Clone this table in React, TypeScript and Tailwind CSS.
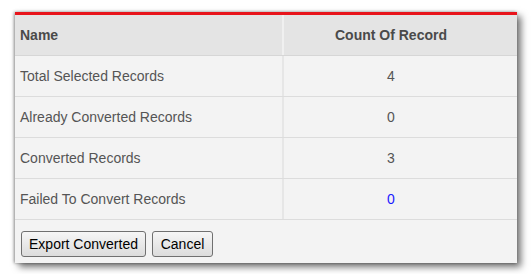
import React from "react";

const rows: { name: string; count: number; link?: boolean }[] = [
  { name: "Total Selected Records", count: 4 },
  { name: "Already Converted Records", count: 0 },
  { name: "Converted Records", count: 3 },
  { name: "Failed To Convert Records", count: 0, link: true },
];

export default function App() {
  return (
    <div
      className="w-[532px] h-[274px] bg-white pt-[12px] pl-[15px]"
      style={{ fontFamily: '"Liberation Sans", Arial, sans-serif' }}
    >
      <div className="w-[502px] h-[251px] bg-[#f3f3f3] border-t-[3px] border-[#e8141b] shadow-[4px_4px_7px_rgba(0,0,0,0.55),-1px_0_3px_rgba(0,0,0,0.4)] flex flex-col">
        <div className="flex h-[41px] bg-[#e4e4e4] border-b border-[#d6d6d6] text-[14px] font-bold text-[#4a4a4a]">
          <div className="w-[269px] flex items-center pl-[5px] pt-[1px] border-r-2 border-[#f0f0f0]">Name</div>
          <div className="flex-1 flex items-center justify-center pr-[19px] pt-[1px]">Count Of Record</div>
        </div>
        {rows.map((r) => (
          <div key={r.name} className="flex h-[41px] border-b border-[#dcdcdc] text-[14px] text-[#555]">
            <div className="w-[269px] flex items-center pl-[5px] pt-[1px] border-r-2 border-[#e6e6e6]">{r.name}</div>
            <div
              className={
                "flex-1 flex items-center justify-center pr-[19px] pt-[1px] " +
                (r.link ? "text-[#1a1aff]" : "")
              }
            >
              {r.count}
            </div>
          </div>
        ))}
        <div className="flex gap-[6px] pl-[6px] pt-[11px]">
          <button className="h-[26px] w-[125px] border border-[#707070] rounded-[3px] bg-gradient-to-b from-[#f6f6f6] to-[#dcdcdc] text-[14px] text-black leading-none">
            Export Converted
          </button>
          <button className="h-[26px] w-[61px] border border-[#707070] rounded-[3px] bg-gradient-to-b from-[#f6f6f6] to-[#dcdcdc] text-[14px] text-black leading-none">
            Cancel
          </button>
        </div>
      </div>
    </div>
  );
}
